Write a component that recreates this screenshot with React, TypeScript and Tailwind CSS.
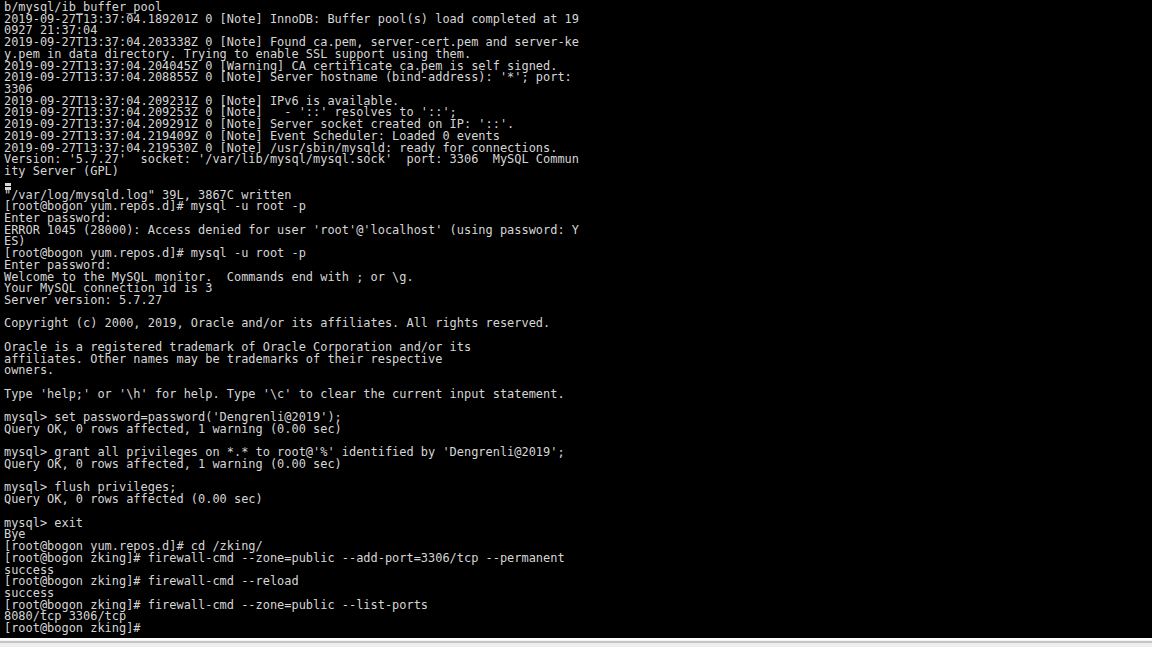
// Terminal session screenshot: mysql setup over ssh, Windows-style console font

const LINES = [
  "b/mysql/ib_buffer_pool",
  "2019-09-27T13:37:04.189201Z 0 [Note] InnoDB: Buffer pool(s) load completed at 19",
  "0927 21:37:04",
  "2019-09-27T13:37:04.203338Z 0 [Note] Found ca.pem, server-cert.pem and server-ke",
  "y.pem in data directory. Trying to enable SSL support using them.",
  "2019-09-27T13:37:04.204045Z 0 [Warning] CA certificate ca.pem is self signed.",
  "2019-09-27T13:37:04.208855Z 0 [Note] Server hostname (bind-address): '*'; port:",
  "3306",
  "2019-09-27T13:37:04.209231Z 0 [Note] IPv6 is available.",
  "2019-09-27T13:37:04.209253Z 0 [Note]   - '::' resolves to '::';",
  "2019-09-27T13:37:04.209291Z 0 [Note] Server socket created on IP: '::'.",
  "2019-09-27T13:37:04.219409Z 0 [Note] Event Scheduler: Loaded 0 events",
  "2019-09-27T13:37:04.219530Z 0 [Note] /usr/sbin/mysqld: ready for connections.",
  "Version: '5.7.27'  socket: '/var/lib/mysql/mysql.sock'  port: 3306  MySQL Commun",
  "ity Server (GPL)",
  "__CURSOR__",
  "\"/var/log/mysqld.log\" 39L, 3867C written",
  "[root@bogon yum.repos.d]# mysql -u root -p",
  "Enter password:",
  "ERROR 1045 (28000): Access denied for user 'root'@'localhost' (using password: Y",
  "ES)",
  "[root@bogon yum.repos.d]# mysql -u root -p",
  "Enter password:",
  "Welcome to the MySQL monitor.  Commands end with ; or \\g.",
  "Your MySQL connection id is 3",
  "Server version: 5.7.27",
  "",
  "Copyright (c) 2000, 2019, Oracle and/or its affiliates. All rights reserved.",
  "",
  "Oracle is a registered trademark of Oracle Corporation and/or its",
  "affiliates. Other names may be trademarks of their respective",
  "owners.",
  "",
  "Type 'help;' or '\\h' for help. Type '\\c' to clear the current input statement.",
  "",
  "mysql> set password=password('Dengrenli@2019');",
  "Query OK, 0 rows affected, 1 warning (0.00 sec)",
  "",
  "mysql> grant all privileges on *.* to root@'%' identified by 'Dengrenli@2019';",
  "Query OK, 0 rows affected, 1 warning (0.00 sec)",
  "",
  "mysql> flush privileges;",
  "Query OK, 0 rows affected (0.00 sec)",
  "",
  "mysql> exit",
  "Bye",
  "[root@bogon yum.repos.d]# cd /zking/",
  "[root@bogon zking]# firewall-cmd --zone=public --add-port=3306/tcp --permanent",
  "success",
  "[root@bogon zking]# firewall-cmd --reload",
  "success",
  "[root@bogon zking]# firewall-cmd --zone=public --list-ports",
  "8080/tcp 3306/tcp",
  "[root@bogon zking]#",
]

function Line({ text }: { text: string }) {
  if (text === "__CURSOR__") {
    // leftover block cursor from the editor
    return (
      <div className="h-[11.72px] flex items-end pl-[1px]">
        <div className="w-[6px] h-[7px] bg-[#d8d8d8] flex flex-col justify-center">
          <div className="h-px bg-black" />
        </div>
      </div>
    )
  }
  return <div className="h-[11.72px] whitespace-pre">{text || " "}</div>
}

export default function App() {
  return (
    <div className="w-[1152px] h-[647px] flex flex-col overflow-hidden bg-[#f0f0f0]">
      <div
        className="flex-1 bg-black pl-[4px] pt-[2px] text-[#d6d6d6] text-[11.95px] leading-[11.72px] overflow-hidden"
        style={{ fontFamily: '"DejaVu Sans Mono", "Liberation Mono", monospace' }}
      >
        {LINES.map((l, i) => (
          <Line key={i} text={l} />
        ))}
      </div>
      {/* status strip under the terminal */}
      <div className="h-[9px] flex flex-col">
        <div className="h-[2px] bg-white" />
        <div className="h-px bg-[#f4f4f4]" />
        <div className="h-[2px] bg-[#c4c4c4]" />
        <div className="flex-1 bg-[#eeeeee]" />
      </div>
    </div>
  )
}
